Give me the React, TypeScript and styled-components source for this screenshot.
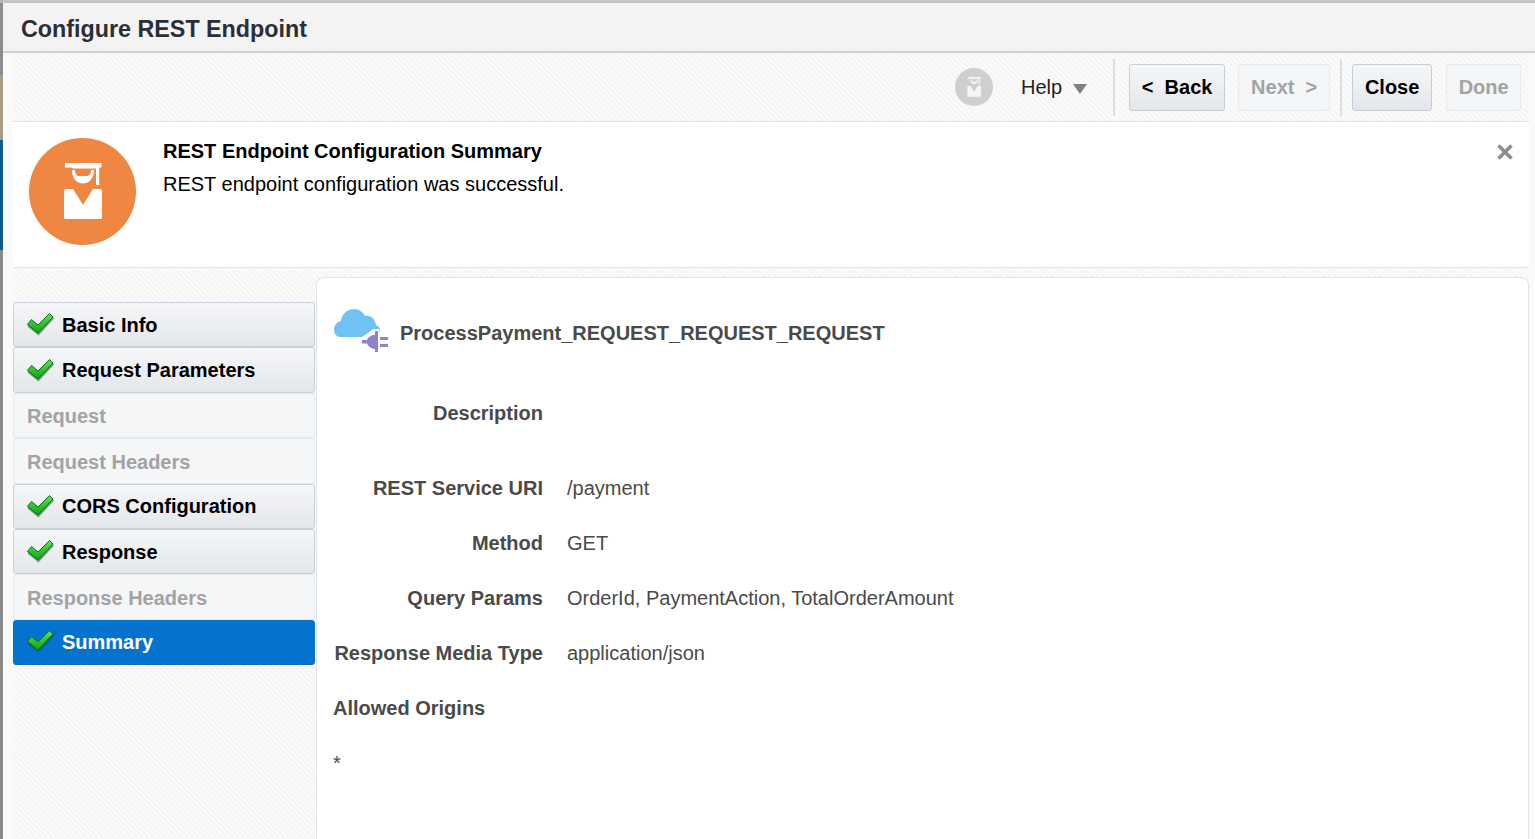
import React from 'react';
import styled, { createGlobalStyle } from 'styled-components';

const Global = createGlobalStyle`
  html, body { margin: 0; padding: 0; height: 100%; overflow: hidden; background: #fff; }
  body { font-family: "Liberation Sans", Arial, sans-serif; }
`;

const hatch = `repeating-linear-gradient(45deg, #f5f5f5 0 2px, #fbfbfb 2px 4px)`;

const Page = styled.div`
  width: 1535px;
  height: 839px;
  display: flex;
  overflow: hidden;
`;
const Backdrop = styled.div`
  width: 3px;
  flex: none;
  background: linear-gradient(#b5b5b5 0 3px, #8d8d8d 3px 75px, #a99c86 75px 140px, #0c5c94 140px 250px, #8a8a8a 250px);
`;
const Dialog = styled.div`
  flex: 1;
  display: flex;
  flex-direction: column;
  min-width: 0;
  border-top: 3px solid #c4c6c8;
  background: #fafafa;
`;
const TitleBar = styled.div`
  height: 50px;
  flex: none;
  box-sizing: border-box;
  display: flex;
  align-items: center;
  padding: 4px 0 0 18px;
  background: #f3f3f3;
  border-bottom: 2px solid #c8d2dc;
  font-size: 23.3px;
  font-weight: 700;
  color: #2b2f33;
`;
const Body = styled.div`
  flex: 1;
  display: flex;
  flex-direction: column;
  margin: 0 6px 0 10px;
  min-height: 0;
`;
const Toolbar = styled.div`
  height: 68px;
  flex: none;
  display: flex;
  align-items: center;
  background: ${hatch};
  padding-left: 942px;
`;
const ToolbarRule = styled.div`
  height: 1px;
  flex: none;
  background: #dfe4ea;
`;
const HelpLabel = styled.span`
  margin-left: 28px;
  font-size: 20px;
  color: #1f1f1f;
`;
const Caret = styled.span`
  width: 0;
  height: 0;
  margin: 3px 0 0 11px;
  border-left: 7px solid transparent;
  border-right: 7px solid transparent;
  border-top: 10px solid #7d8084;
`;
const Separator = styled.div<{ $left: number; $right: number }>`
  width: 2px;
  height: 57px;
  margin: 0 ${p => p.$right}px 0 ${p => p.$left}px;
  background: #d8dfe6;
`;
const Button = styled.div<{ $on?: boolean; $w: number; $left?: number }>`
  width: ${p => p.$w}px;
  height: 47px;
  box-sizing: border-box;
  margin-left: ${p => p.$left ?? 0}px;
  display: flex;
  align-items: center;
  justify-content: center;
  white-space: pre;
  border-radius: 3px;
  font-size: 20px;
  font-weight: 700;
  border: 1px solid ${p => (p.$on ? '#c3ced9' : '#e6eaee')};
  color: ${p => (p.$on ? '#000' : '#a3a3a3')};
  background: ${p => (p.$on ? 'linear-gradient(#f5f6f8, #e4e7ea)' : '#f4f6f8')};
`;
const Banner = styled.div`
  height: 145px;
  flex: none;
  display: flex;
  position: relative;
  background: #fff;
  border-bottom: 1px solid #dfe4ea;
  box-sizing: content-box;
`;
const BadgeSlot = styled.div`
  width: 150px;
  flex: none;
  padding: 16px 0 0 16px;
  box-sizing: border-box;
`;
const BannerText = styled.div`
  padding-top: 17px;
  color: #000;
  font-size: 20px;
  line-height: 24px;
`;
const BannerTitle = styled.div`
  font-weight: 700;
  margin-bottom: 9px;
`;
const Dismiss = styled.svg`
  position: absolute;
  top: 21px;
  right: 15px;
`;
const Lower = styled.div`
  flex: 1;
  display: flex;
  min-height: 0;
  background: ${hatch};
`;
const Nav = styled.div`
  width: 302px;
  flex: none;
  padding-top: 34px;
  display: flex;
  flex-direction: column;
`;
const Step = styled.div<{ $state: 'done' | 'off' | 'current' }>`
  height: 45.4px;
  box-sizing: border-box;
  display: flex;
  align-items: center;
  gap: 7px;
  padding-left: 13px;
  border-radius: 3px;
  font-size: 20px;
  font-weight: 700;
  ${p =>
    p.$state === 'done'
      ? 'background: linear-gradient(#f5f6f8, #e4e7ea); border: 1px solid #c7d1db; color: #000; padding-top: 1px;'
      : p.$state === 'off'
        ? 'background: #f4f6f8; border: 1px solid #e6eaee; color: #a3a3a3; padding-top: 3px;'
        : 'background: #0572ce; border: 1px solid #0572ce; color: #fff;'}
`;
const Panel = styled.div`
  flex: 1;
  margin: 9px 0 0 1px;
  padding: 27px 0 0 16px;
  background: #fff;
  border: 1px solid #dfe4ea;
  border-bottom: 0;
  border-radius: 8px 8px 0 0;
  box-sizing: border-box;
  color: #4a4a4a;
`;
const Heading = styled.div`
  display: flex;
  align-items: center;
  gap: 11px;
  height: 50px;
  font-size: 20px;
  font-weight: 700;
`;
const HeadingText = styled.span`
  padding-top: 6px;
`;
const Fields = styled.div`
  display: grid;
  grid-template-columns: 210px 1fr;
  column-gap: 24px;
  margin-top: 31px;
  font-size: 20px;
  line-height: 55px;
`;
const Label = styled.div`
  height: 55px;
  font-weight: 700;
  text-align: right;
`;
const Spacer = styled.div`
  height: 20px;
  grid-column: 1 / -1;
`;
const Value = styled.div`
  height: 55px;
`;
const Origins = styled.div`
  font-weight: 700;
  font-size: 20px;
  line-height: 55px;
`;
const Star = styled.div`
  font-size: 20px;
  line-height: 24px;
  margin-top: 15px;
`;

const Graduate = ({ size, bg, fg }: { size: number; bg: string; fg: string }) => (
  <svg width={size} height={size} viewBox="0 0 107 107" style={{ display: 'block' }}>
    <circle cx="53.5" cy="53.5" r="53.5" fill={bg} />
    <path fill={fg} d="M36 25h36.500v4.500H67v1H44l-2-1h-6z" />
    <path fill={fg} d="M67 29h3.200v18H67z" />
    <path fill={fg} d="M43 32h3v.5c0 3 1.500 5.500 4 5.500h8c2.500 0 4-2.500 4-5.500V32h3c0 8.500-5 13.500-11 13.500S43 40.500 43 32z" />
    <path fill={fg} d="M37 51h7l10 16 10-16h7.500a1.500 1.500 0 0 1 1.500 1.500V79.500a1.500 1.500 0 0 1-1.500 1.500H36.500A1.500 1.500 0 0 1 35 79.500V53a2 2 0 0 1 2-2z" />
  </svg>
);

const Check = ({ id }: { id: string }) => (
  <svg width="28" height="24" viewBox="0 0 28 24" style={{ flex: 'none', display: 'block' }}>
    <defs>
      <linearGradient id={id} x1="0" y1="0" x2="0" y2="1">
        <stop offset="0" stopColor="#63e24b" />
        <stop offset="1" stopColor="#08a80f" />
      </linearGradient>
    </defs>
    <path d="M0.500 13.500l11 9L27 5.500 23 2 11 14l-6.500-5z" fill="#0b5a1c" opacity=".55" />
    <path d="M0.500 11.500L11 20 26 4 22.500 .5 11 12 4.500 6.500z" fill={`url(#${id})`} stroke="#136a26" strokeWidth="1" strokeLinejoin="round" />
  </svg>
);

const CloudPlug = () => (
  <svg width="56" height="50" viewBox="0 0 56 50" style={{ flex: 'none', display: 'block' }}>
    <path fill="#6fc3f3" d="M7 32C3 32 1 28 1 24.500S3.500 17 8 16c1-7 6-12 13-12 5 0 9 3 11 7 6-1 10 3 11 9 3 1 4.500 4 3.500 7-1 3-3 5-6 5z" />
    <path fill="#fff" d="M27 33l8-5 5-4h6v8l-10 14H27z" />
    <path fill="#8f85c6" d="M29 35h5C35 32 38 30 42 30v-4h3v21h-3v-3C38 44 35 41 34 38.500h-5z" />
    <path fill="#8f85c6" d="M47 32h8v3h-8zM47 39h8v3h-8z" />
  </svg>
);

const steps: { label: string; state: 'done' | 'off' | 'current' }[] = [
  { label: 'Basic Info', state: 'done' },
  { label: 'Request Parameters', state: 'done' },
  { label: 'Request', state: 'off' },
  { label: 'Request Headers', state: 'off' },
  { label: 'CORS Configuration', state: 'done' },
  { label: 'Response', state: 'done' },
  { label: 'Response Headers', state: 'off' },
  { label: 'Summary', state: 'current' },
];

export default function App() {
  return (
    <Page>
      <Global />
      <Backdrop />
      <Dialog>
        <TitleBar>Configure REST Endpoint</TitleBar>
        <Body>
          <Toolbar>
            <Graduate size={38} bg="#cfcfcf" fg="#f6f6f6" />
            <HelpLabel>Help</HelpLabel>
            <Caret />
            <Separator $left={26} $right={14} />
            <Button $on $w={96}>{'<  Back'}</Button>
            <Button $w={92} $left={13}>{'Next  >'}</Button>
            <Separator $left={10} $right={10} />
            <Button $on $w={80}>Close</Button>
            <Button $w={75} $left={14}>Done</Button>
          </Toolbar>
          <ToolbarRule />
          <Banner>
            <BadgeSlot>
              <Graduate size={107} bg="#ef8641" fg="#fff" />
            </BadgeSlot>
            <BannerText>
              <BannerTitle>REST Endpoint Configuration Summary</BannerTitle>
              REST endpoint configuration was successful.
            </BannerText>
            <Dismiss width="18" height="18" viewBox="0 0 18 18">
              <path d="M2.500 2.500l13 13M15.500 2.500l-13 13" stroke="#8c8f92" strokeWidth="3.600" />
            </Dismiss>
          </Banner>
          <Lower>
            <Nav>
              {steps.map((s, i) => (
                <Step key={s.label} $state={s.state}>
                  {s.state !== 'off' && <Check id={`check-${i}`} />}
                  {s.label}
                </Step>
              ))}
            </Nav>
            <Panel>
              <Heading>
                <CloudPlug />
                <HeadingText>ProcessPayment_REQUEST_REQUEST_REQUEST</HeadingText>
              </Heading>
              <Fields>
                <Label>Description</Label>
                <Value />
                <Spacer />
                <Label>REST Service URI</Label>
                <Value>/payment</Value>
                <Label>Method</Label>
                <Value>GET</Value>
                <Label>Query Params</Label>
                <Value>OrderId, PaymentAction, TotalOrderAmount</Value>
                <Label>Response Media Type</Label>
                <Value>application/json</Value>
              </Fields>
              <Origins>Allowed Origins</Origins>
              <Star>*</Star>
            </Panel>
          </Lower>
        </Body>
      </Dialog>
    </Page>
  );
}
